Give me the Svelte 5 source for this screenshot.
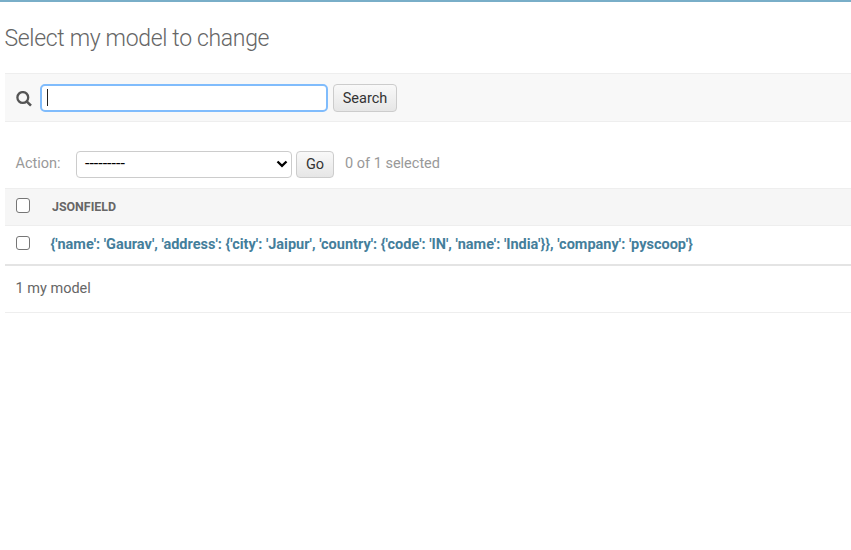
<script>
  let query = $state('');
  const rows = [
    "{'name': 'Gaurav', 'address': {'city': 'Jaipur', 'country': {'code': 'IN', 'name': 'India'}}, 'company': 'pyscoop'}"
  ];
</script>

<div class="page">
  <h1>Select my model to change</h1>

  <div class="toolbar">
    <svg class="magnifier" viewBox="0 0 16 16" width="16" height="16" aria-hidden="true">
      <circle cx="6.8" cy="6.5" r="5.4" fill="none" stroke="#555" stroke-width="2.3" />
      <path d="M10.6 10.3 L15 14.7" stroke="#555" stroke-width="2.6" fill="none" />
    </svg>
    <div class="searchbar">
      <span class="caret"></span>
      <input type="text" bind:value={query} aria-label="Search" />
    </div>
    <button class="search">Search</button>
  </div>

  <div class="actions">
    <span class="label">Action:</span>
    <div class="select">
      <span class="dashes">---------</span>
      <svg viewBox="0 0 12 8" width="12" height="8" aria-hidden="true">
        <path d="M1.5 1.5 L6 5.8 L10.5 1.5" fill="none" stroke="#000" stroke-width="2.3" />
      </svg>
    </div>
    <button class="go">Go</button>
    <span class="counter">0 of 1 selected</span>
  </div>

  <div class="row head">
    <span class="check"></span>
    <span class="column">JSONFIELD</span>
  </div>
  {#each rows as row}
    <div class="row">
      <span class="check"></span>
      <a href="#change">{row}</a>
    </div>
  {/each}

  <p class="paginator">1 my model</p>
</div>

<style>
  :global(body) {
    background: #fff;
    overflow: hidden;
  }
  .page {
    box-sizing: border-box;
    height: 550px;
    padding-left: 5px;
    border-top: 2px solid #79aec8;
    font-family: Roboto, "Liberation Sans", sans-serif;
    font-size: 14.5px;
    color: #666;
    white-space: nowrap;
  }
  h1 {
    margin: 0 0 0 -0.5px;
    height: 71px;
    line-height: 73px;
    font-size: 23px;
    font-weight: 300;
    letter-spacing: -0.33px;
  }
  .toolbar {
    box-sizing: border-box;
    display: flex;
    align-items: center;
    height: 49px;
    padding-left: 11px;
    background: #f8f8f8;
    border-top: 1px solid #eee;
    border-bottom: 1px solid #eee;
  }
  .magnifier {
    margin: 2px 8px 0 0;
  }
  .searchbar {
    box-sizing: border-box;
    display: flex;
    align-items: center;
    width: 288px;
    height: 28px;
    padding-left: 5px;
    border: 2px solid #80bcfc;
    border-radius: 5px;
    background: #fff;
  }
  .caret {
    width: 1px;
    height: 17px;
    background: #222;
  }
  input {
    flex: 1;
    min-width: 0;
    padding: 0;
    border: 0;
    outline: 0;
    background: none;
    font: inherit;
  }
  button {
    box-sizing: border-box;
    height: 28px;
    padding: 0;
    border: 1px solid #ccc;
    border-radius: 4px;
    background: linear-gradient(#f9f9f9, #e6e6e6);
    color: #333;
    font: 14.5px Roboto, "Liberation Sans", sans-serif;
  }
  .search {
    width: 64px;
    margin-left: 5px;
    padding-top: 1px;
  }
  .actions {
    box-sizing: border-box;
    display: flex;
    align-items: center;
    height: 66px;
    padding: 18px 0 0 11px;
    color: #999;
  }
  .label {
    width: 60px;
    margin-left: -0.5px;
    margin-right: 0.5px;
  }
  .label,
  .counter {
    margin-top: -1px;
  }
  .select {
    box-sizing: border-box;
    display: flex;
    align-items: center;
    justify-content: space-between;
    width: 216px;
    height: 27px;
    padding: 0 3px 0 8px;
    border: 1px solid #ccc;
    border-radius: 4px;
    background: #fff;
    color: #000;
  }
  .dashes {
    font-size: 16px;
    line-height: 20px;
  }
  .go {
    width: 38px;
    height: 27px;
    margin-left: 4px;
    padding-top: 1px;
  }
  .counter {
    margin-left: 11px;
  }
  .row {
    box-sizing: border-box;
    display: flex;
    align-items: center;
    height: 40px;
    padding: 0 0 4px 10.5px;
    border-bottom: 2px solid #e4e4e4;
  }
  .head {
    height: 38px;
    padding-bottom: 3px;
    border-top: 1px solid #eee;
    border-bottom: 1px solid #eee;
    background: #f6f6f6;
  }
  .check {
    box-sizing: border-box;
    width: 14.5px;
    height: 14.5px;
    border: 1px solid #767676;
    border-radius: 3px;
    background: #fff;
  }
  .column {
    margin-left: 22px;
    padding-top: 2px;
    font-size: 12.4px;
    font-weight: 700;
  }
  a {
    margin-left: 20.5px;
    padding-top: 2px;
    color: #447e9b;
    font-weight: 700;
    text-decoration: none;
  }
  .paginator {
    box-sizing: border-box;
    margin: 0;
    height: 47px;
    padding-left: 10.5px;
    border-bottom: 1px solid #eee;
    line-height: 46px;
  }
</style>
